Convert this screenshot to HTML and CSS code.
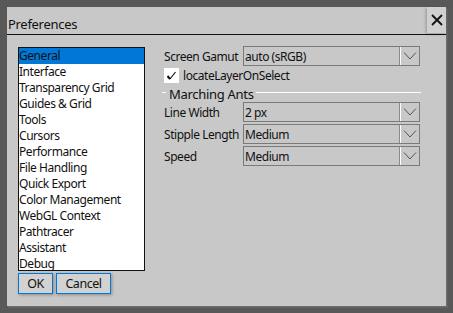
FILE: index.html
```html
<!DOCTYPE html>
<html>
<head>
<meta charset="utf-8">
<link rel="stylesheet" href="styles.css">
</head>
<body>
<div class="dialog">
  <div class="titlebar">
    <span class="title">Preferences</span>
    <div class="close"><svg width="14" height="14" viewBox="0 0 14 14"><path d="M2 2 L12 12 M12 2 L2 12" stroke="#111" stroke-width="1.8" fill="none"/></svg></div>
  </div>
  <div class="content">
    <div class="leftcol">
      <div class="list">
        <div class="item sel">General</div>
        <div class="item">Interface</div>
        <div class="item">Transparency Grid</div>
        <div class="item">Guides &amp; Grid</div>
        <div class="item">Tools</div>
        <div class="item">Cursors</div>
        <div class="item">Performance</div>
        <div class="item">File Handling</div>
        <div class="item">Quick Export</div>
        <div class="item">Color Management</div>
        <div class="item">WebGL Context</div>
        <div class="item">Pathtracer</div>
        <div class="item">Assistant</div>
        <div class="item">Debug</div>
      </div>
      <div class="buttons">
        <div class="btn ok">OK</div>
        <div class="btn cancel">Cancel</div>
      </div>
    </div>
    <div class="rightcol">
      <div class="row first">
        <span class="label">Screen Gamut</span>
        <div class="select"><span class="val">auto (sRGB)</span><span class="arrow"><svg width="14" height="8" viewBox="0 0 14 8"><path d="M1 0.5 L7 7 L13 0.5" stroke="#555" stroke-width="1" fill="none"/></svg></span></div>
      </div>
      <div class="checkrow">
        <span class="checkbox"><svg width="15" height="15" viewBox="0 0 15 15"><path d="M3.5 8 L6 11" stroke="#111" stroke-width="2" fill="none"/><path d="M6 11 L11.5 4" stroke="#111" stroke-width="1.2" fill="none"/></svg></span>
        <span class="checklabel">locateLayerOnSelect</span>
      </div>
      <div class="legend">
        <span class="dash"></span>
        <span class="legtext">Marching Ants</span>
        <span class="line"></span>
      </div>
      <div class="row">
        <span class="label">Line Width</span>
        <div class="select"><span class="val">2 px</span><span class="arrow"><svg width="14" height="8" viewBox="0 0 14 8"><path d="M1 0.5 L7 7 L13 0.5" stroke="#555" stroke-width="1" fill="none"/></svg></span></div>
      </div>
      <div class="row">
        <span class="label">Stipple Length</span>
        <div class="select"><span class="val">Medium</span><span class="arrow"><svg width="14" height="8" viewBox="0 0 14 8"><path d="M1 0.5 L7 7 L13 0.5" stroke="#555" stroke-width="1" fill="none"/></svg></span></div>
      </div>
      <div class="row">
        <span class="label">Speed</span>
        <div class="select"><span class="val">Medium</span><span class="arrow"><svg width="14" height="8" viewBox="0 0 14 8"><path d="M1 0.5 L7 7 L13 0.5" stroke="#555" stroke-width="1" fill="none"/></svg></span></div>
      </div>
    </div>
  </div>
</div>
</body>
</html>
```
FILE: styles.css
```css
html, body {
  margin: 0;
  padding: 0;
}
body {
  background: #585858;
  width: 453px;
  height: 313px;
  overflow: hidden;
  font-family: "Noto Sans", "Open Sans", sans-serif;
  font-size: 12px;
  letter-spacing: -0.45px;
  color: #111;
  padding: 7px 0 0 7px;
  box-sizing: border-box;
}
.dialog {
  width: 439px;
  height: 299px;
  background: #c8c8c8;
  box-shadow: 1px 1px 0 #6c6c6c, 2px 2px 1px #626262;
  position: relative;
}
.titlebar {
  height: 27px;
  border-bottom: 1px solid #111;
  display: flex;
  align-items: flex-end;
  padding-left: 1px;
}
.title {
  font-size: 13px;
  line-height: 18px;
  padding-bottom: 1px;
  letter-spacing: -0.3px;
}
.close {
  position: absolute;
  right: 0;
  top: 0;
  width: 19px;
  height: 26px;
  background: #d0d0d0;
  box-shadow: -1px 1px 3px rgba(0,0,0,0.25);
  display: flex;
  justify-content: center;
  align-items: center;
}
.content {
  display: flex;
  padding: 11px 0 0 11px;
}
.leftcol {
  width: 127px;
  padding-top: 1px;
}
.list {
  border: 1px solid #111;
  background: #fff;
  height: 222px;
}
.item {
  height: 16px;
  line-height: 16px;
  white-space: nowrap;
}
.item.sel {
  background: #0078d7;
}
.buttons {
  display: flex;
  gap: 3px;
  margin-top: 2px;
}
.btn {
  height: 19px;
  border: 1px solid #0078d7;
  background: #d2d2d2;
  box-shadow: 1px 1px 3px rgba(0,0,0,0.3);
  display: flex;
  align-items: center;
  justify-content: center;
  font-size: 12.5px;
}
.ok { width: 33px; }
.cancel { width: 53px; }
.rightcol {
  margin-left: 17px;
  width: 259px;
}
.row {
  display: flex;
  align-items: center;
  height: 20px;
  margin-bottom: 2px;
  padding-left: 2px;
}
.label {
  width: 79px;
  white-space: nowrap;
}
.select {
  width: 175px;
  height: 18px;
  border: 1px solid #7a7a7a;
  display: flex;
  align-items: center;
}
.val {
  flex: 1;
  padding-left: 1px;
  padding-top: 1px;
}
.arrow {
  width: 18px;
  height: 18px;
  border-left: 1px solid #fff;
  box-shadow: -1px 0 0 #8a8a8a;
  display: flex;
  align-items: center;
  justify-content: center;
}
.checkrow {
  display: flex;
  align-items: center;
  height: 15px;
  margin-top: 1px;
  padding-left: 2px;
}
.checkbox {
  width: 15px;
  height: 15px;
  background: #fff;
  display: flex;
}
.checklabel {
  margin-left: 4px;
}
.legend {
  display: flex;
  align-items: flex-start;
  height: 19px;
}
.dash {
  width: 4px;
  margin-top: 9px;
  border-top: 1px solid #fff;
}
.legtext {
  font-size: 13px;
  line-height: 18px;
  margin-top: 2px;
  padding: 0 2px 0 3px;
  letter-spacing: -0.3px;
}
.line {
  flex: 1;
  margin-top: 9px;
  border-top: 1px solid #fff;
}
```
